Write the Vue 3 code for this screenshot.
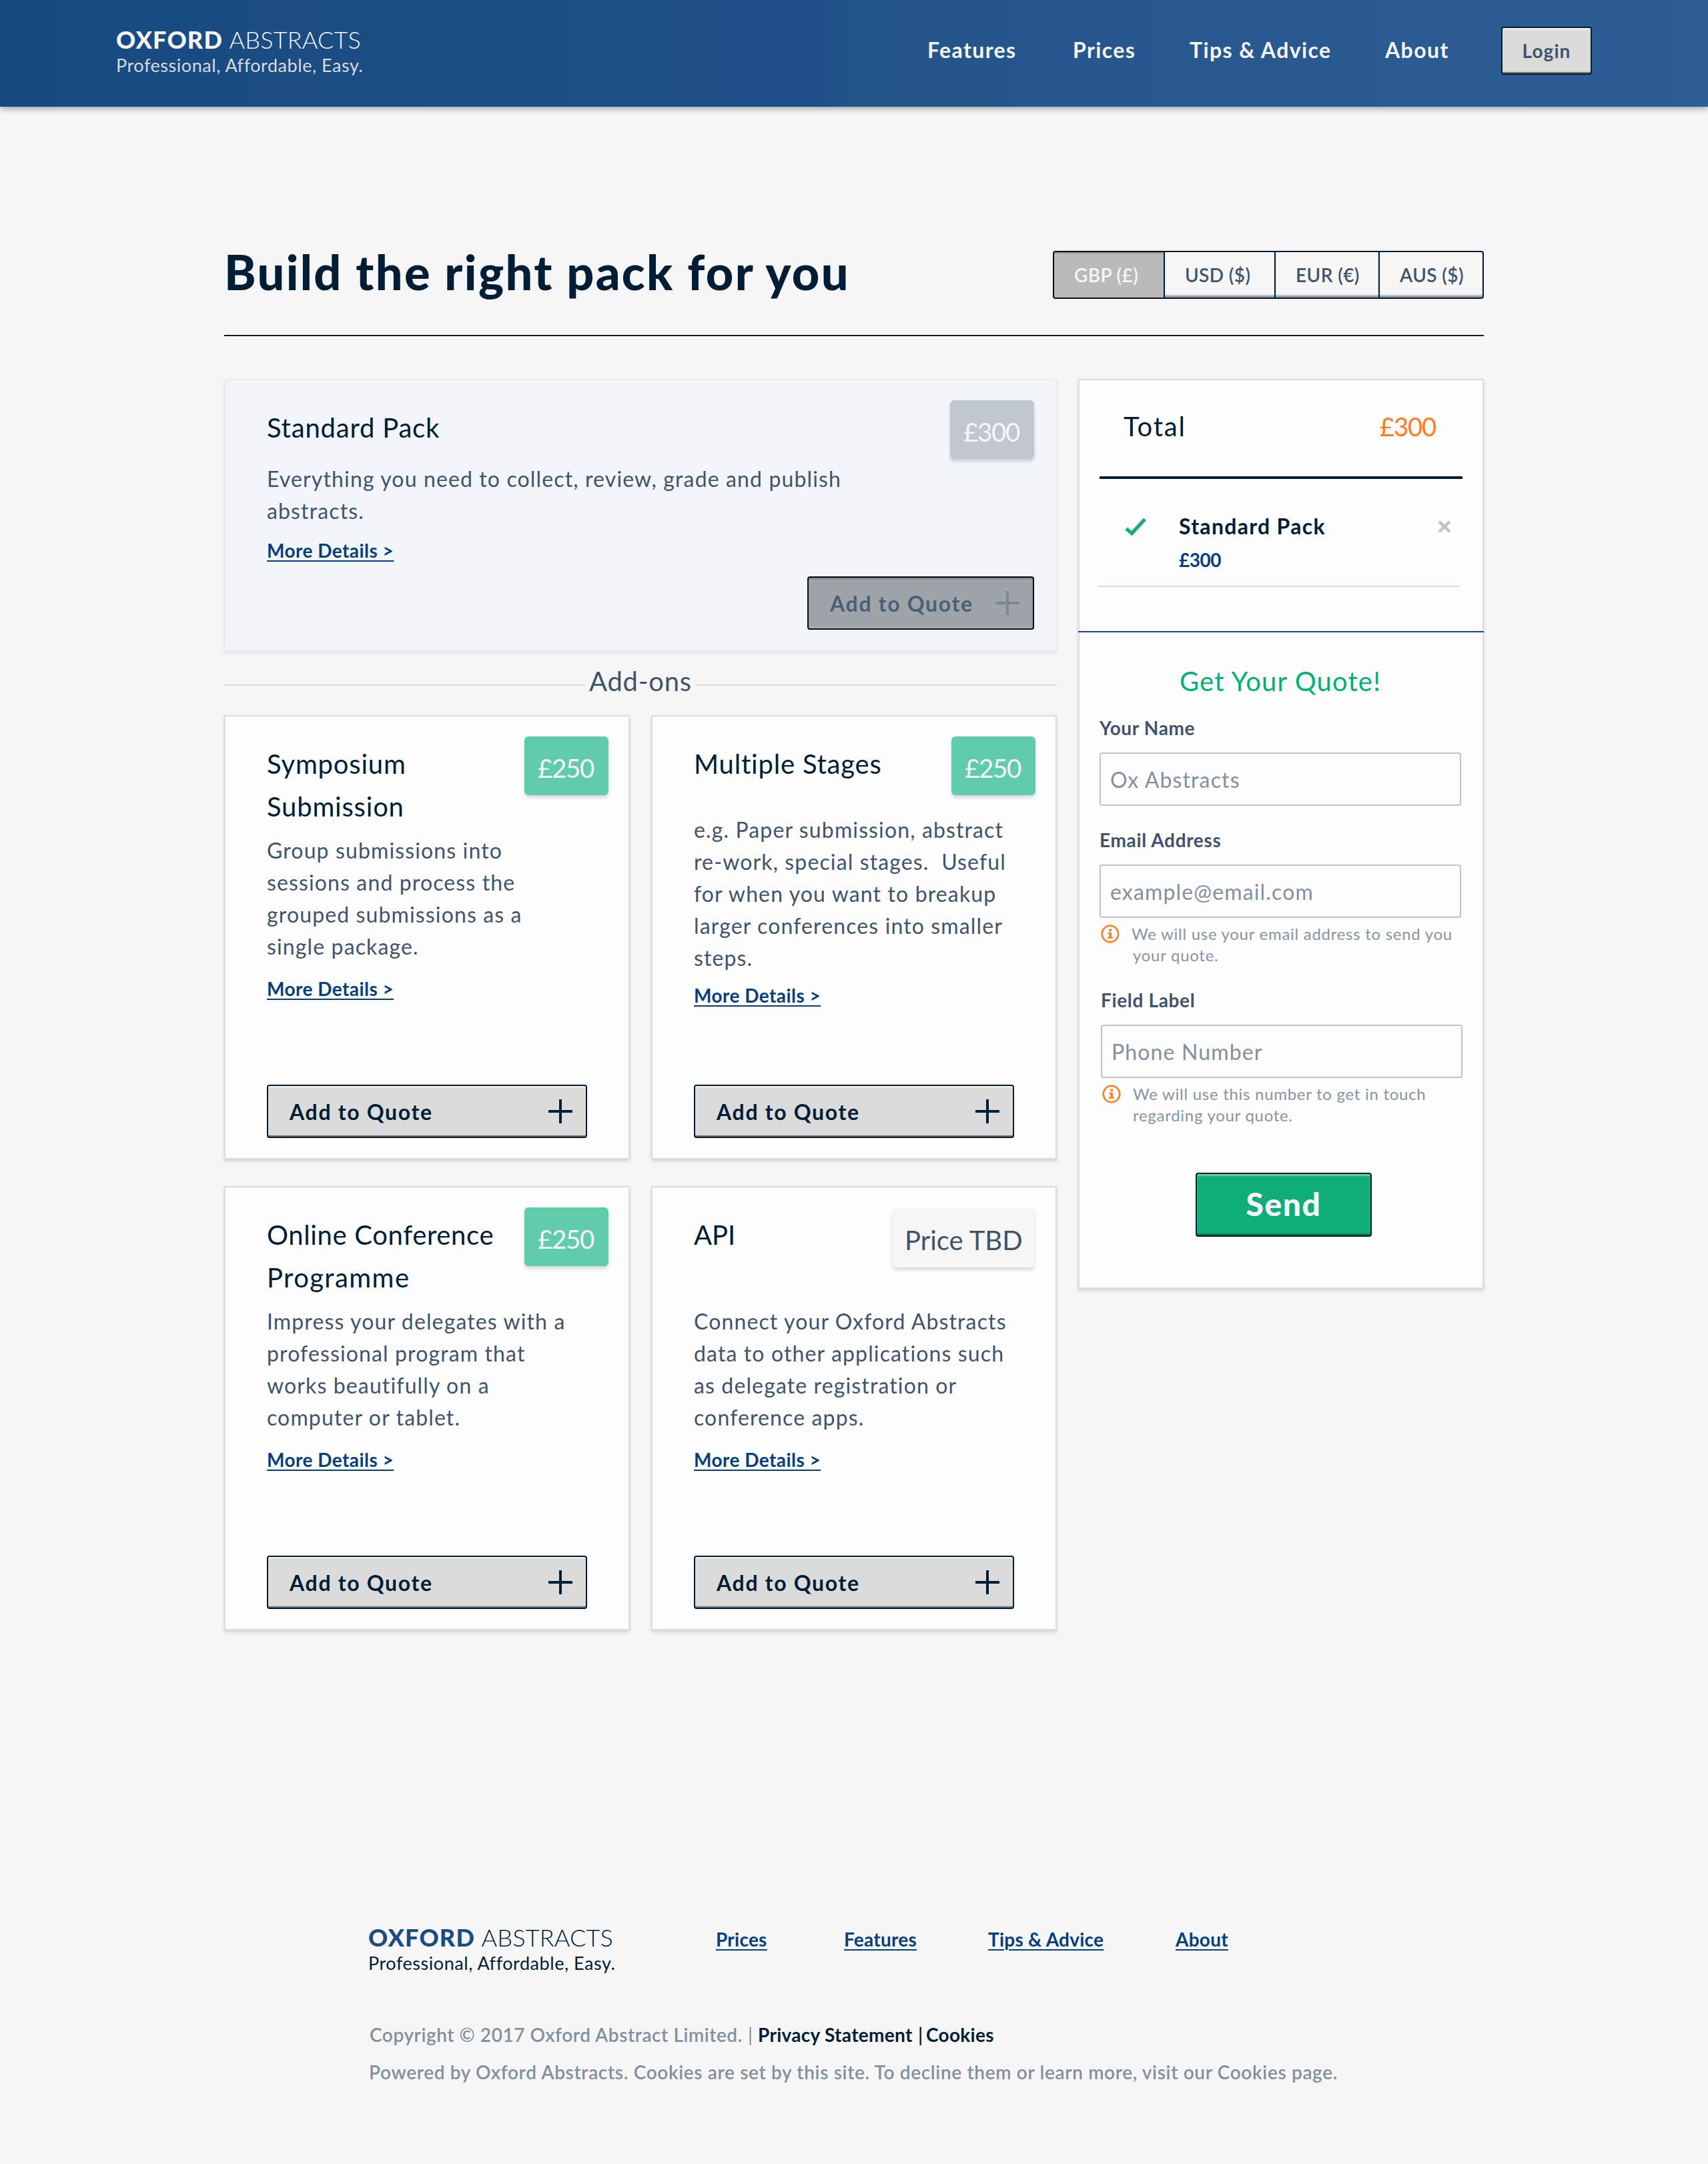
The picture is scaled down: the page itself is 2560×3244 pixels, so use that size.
<script setup>
import { ref } from 'vue'

const navLinks = ['Features', 'Prices', 'Tips & Advice', 'About']
const footerLinks = ['Prices', 'Features', 'Tips & Advice', 'About']

const currencies = ['GBP (£)', 'USD ($)', 'EUR (€)', 'AUS ($)']
const currency = ref('GBP (£)')

const addOns = [
  {
    id: 'symposium',
    title: ['Symposium', 'Submission'],
    price: '£250',
    lines: ['Group submissions into', 'sessions and process the', 'grouped submissions as a', 'single package.'],
  },
  {
    id: 'stages',
    title: ['Multiple Stages'],
    price: '£250',
    lines: [
      'e.g. Paper submission, abstract',
      're-work, special stages.\u00a0 Useful',
      'for when you want to breakup',
      'larger conferences into smaller',
      'steps.',
    ],
  },
  {
    id: 'programme',
    title: ['Online Conference', 'Programme'],
    price: '£250',
    lines: ['Impress your delegates with a', 'professional program that', 'works beautifully on a', 'computer or tablet.'],
  },
  {
    id: 'api',
    title: ['API'],
    price: null,
    lines: ['Connect your Oxford Abstracts', 'data to other applications such', 'as delegate registration or', 'conference apps.'],
  },
]

const fields = [
  { id: 'name', label: 'Your Name', type: 'text', placeholder: 'Ox Abstracts', hint: null },
  {
    id: 'email',
    label: 'Email Address',
    type: 'email',
    placeholder: 'example@email.com',
    hint: ['We will use your email address to send you', 'your quote.'],
  },
  {
    id: 'phone',
    label: 'Field Label',
    type: 'tel',
    placeholder: 'Phone Number',
    hint: ['We will use this number to get in touch', 'regarding your quote.'],
  },
]
</script>

<template>
  <div class="page">
    <header class="topbar">
      <div class="logo">
        <div class="logo-name"><strong>OXFORD</strong><span>ABSTRACTS</span></div>
        <div class="logo-tag">Professional, Affordable, Easy.</div>
      </div>
      <nav class="nav">
        <a v-for="link in navLinks" :key="link" class="nav-link">{{ link }}</a>
        <button class="btn login">Login</button>
      </nav>
    </header>

    <main class="content">
      <div class="heading">
        <h1>Build the right pack for you</h1>
        <div class="currencies">
          <button
            v-for="c in currencies"
            :key="c"
            class="currency"
            :class="{ active: c === currency }"
            @click="currency = c"
          >{{ c }}</button>
        </div>
      </div>

      <div class="columns">
        <div class="packs">
          <article class="card standard">
            <div class="head">
              <h2 class="title">Standard Pack</h2>
              <span class="badge muted">£300</span>
            </div>
            <p class="desc">
              <span class="line">Everything you need to collect, review, grade and publish</span>
              <span class="line">abstracts.</span>
            </p>
            <a class="more">More Details &gt;</a>
            <button class="btn add disabled" disabled>
              <span>Add to Quote</span>
              <svg class="plus" viewBox="0 0 36 36"><path d="M18 0V36M0 18H36" /></svg>
            </button>
          </article>

          <div class="separator"><span>Add-ons</span></div>

          <div class="grid">
            <article v-for="item in addOns" :key="item.id" class="card addon" :class="item.id">
              <div class="head">
                <h2 class="title">
                  <span v-for="t in item.title" :key="t" class="line">{{ t }}</span>
                </h2>
                <span v-if="item.price" class="badge">{{ item.price }}</span>
                <span v-else class="badge tbd">Price TBD</span>
              </div>
              <p class="desc">
                <span v-for="l in item.lines" :key="l" class="line">{{ l }}</span>
              </p>
              <a class="more">More Details &gt;</a>
              <button class="btn add">
                <span>Add to Quote</span>
                <svg class="plus" viewBox="0 0 36 36"><path d="M18 0V36M0 18H36" /></svg>
              </button>
            </article>
          </div>
        </div>

        <aside class="card quote">
          <section class="summary">
            <div class="total">
              <span>Total</span>
              <span class="total-price">£300</span>
            </div>
            <div class="item">
              <svg class="check" viewBox="0 0 32 27"><path d="M2 16.5L10.5 23.5L30 2.2" /></svg>
              <div class="item-text">
                <div class="item-name">Standard Pack</div>
                <div class="item-price">£300</div>
              </div>
              <svg class="remove" viewBox="0 0 20 19"><path d="M2 1.8L18 17.2M18 1.8L2 17.2" /></svg>
            </div>
          </section>

          <form class="form" @submit.prevent>
            <h3>Get Your Quote!</h3>
            <div v-for="f in fields" :key="f.id" class="field" :class="f.id">
              <label :for="f.id">{{ f.label }}</label>
              <input :id="f.id" :type="f.type" :placeholder="f.placeholder" />
              <div v-if="f.hint" class="hint">
                <svg class="info" viewBox="0 0 28 28">
                  <circle class="ring" cx="14" cy="14" r="12.2" />
                  <path d="M12.2 6.6h3.8v3.4h-3.8zM10.4 11.8h5.6v6.8h2.2v2.2h-8.4v-2.2h2.6v-4.6h-2z" />
                </svg>
                <p>
                  <span v-for="h in f.hint" :key="h" class="line">{{ h }}</span>
                </p>
              </div>
            </div>
            <button class="btn send">Send</button>
          </form>
        </aside>
      </div>
    </main>

    <footer class="footer">
      <div class="footer-top">
        <div class="logo dark">
          <div class="logo-name"><strong>OXFORD</strong><span>ABSTRACTS</span></div>
          <div class="logo-tag">Professional, Affordable, Easy.</div>
        </div>
        <nav class="footer-nav">
          <a v-for="link in footerLinks" :key="link">{{ link }}</a>
        </nav>
      </div>
      <p class="legal">
        <span class="copy">Copyright © 2017 Oxford Abstract Limited.</span>
        <span class="bar">|</span>
        <a class="privacy">Privacy Statement</a>
        <span class="bar dark-bar">|</span>
        <a>Cookies</a>
      </p>
      <p class="legal powered">Powered by Oxford Abstracts. Cookies are set by this site. To decline them or learn more, visit our Cookies page.</p>
    </footer>
  </div>
</template>

<style>
html,
body {
  margin: 0;
  background: #f6f6f6;
}
</style>

<style scoped>
.page {
  width: 2560px;
  height: 3244px;
  background: #f6f6f6;
  color: #001d36;
  font-family: Lato, 'Liberation Sans', sans-serif;
  box-sizing: border-box;
  overflow: hidden;
}
.page *,
.page *::before,
.page *::after {
  box-sizing: border-box;
}
h1,
h2,
h3,
p {
  margin: 0;
  font-weight: 400;
}
.line {
  display: block;
  white-space: nowrap;
}

/* Top bar */
.topbar {
  display: flex;
  justify-content: space-between;
  height: 160px;
  padding: 40px 174px 0;
  background: linear-gradient(90deg, #174a80 0%, #1f5089 48%, #22558a 50%, #26568d 62%, #2c5e95 100%);
  box-shadow: 0 2px 10px rgba(20, 0, 20, 0.42);
}
.logo {
  color: #f6f6f6;
  white-space: nowrap;
}
.logo-name {
  display: flex;
  height: 40px;
  padding-top: 1px;
  line-height: 36px;
  font-size: 36px;
  font-weight: 300;
}
.logo-name strong {
  width: 169.5px;
  font-weight: 900;
  letter-spacing: 1.2px;
}
.logo-name span {
  letter-spacing: 0.2px;
}
.logo-tag {
  color: #d9dadc;
  font-size: 27px;
  font-weight: 400;
  line-height: 35px;
  letter-spacing: 0.55px;
}
.nav {
  display: grid;
  grid-template-columns: 218px 175px 293px 174px 136px;
}
.nav-link {
  color: #f6f6f6;
  font-size: 32px;
  font-weight: 700;
  line-height: 69px;
  letter-spacing: 1.4px;
}

/* Buttons */
.btn {
  margin: 0;
  border: 2px solid #001d36;
  border-radius: 4px;
  background: #dbdbdb;
  color: #001d36;
  font-family: inherit;
  box-shadow: inset 0 3px 2px -1px rgba(255, 255, 255, 0.8), inset 0 -3px 1px -1px rgba(0, 0, 0, 0.5);
}
.login {
  height: 72px;
  padding: 0 0 1px;
  color: #3c536a;
  font-size: 28px;
  font-weight: 700;
  letter-spacing: 1.1px;
}
.add {
  display: flex;
  justify-content: space-between;
  align-items: center;
  width: 480px;
  height: 80px;
  padding: 0 20px 0 32px;
  font-size: 32px;
  font-weight: 700;
  letter-spacing: 1.69px;
}
.plus {
  width: 36px;
  height: 36px;
  margin-bottom: 1px;
  fill: none;
  stroke: #001d36;
  stroke-width: 4;
}
.add.disabled {
  width: 340px;
  border-color: #0c0d0f;
  background: #9fa4ab;
  color: #4c5f73;
  box-shadow: inset 0 2px 2px rgba(0, 0, 0, 0.25), inset 0 -2px 1px rgba(255, 255, 255, 0.2);
}
.disabled .plus {
  stroke: #7a8794;
}

/* Heading */
.content {
  width: 1888px;
  margin: 0 336px;
}
.heading {
  display: flex;
  justify-content: space-between;
  height: 344px;
  padding-top: 216px;
  border-bottom: 2px solid #001d36;
}
h1 {
  height: 112px;
  margin-top: -25px;
  font-size: 72px;
  font-weight: 900;
  line-height: 112px;
  letter-spacing: 2.35px;
}
.currencies {
  display: grid;
  grid-template-columns: 166px 166px 156px 158px;
  height: 72px;
}
.currency {
  margin: 0;
  padding: 0 0 1px 30px;
  border: 2px solid #001d36;
  border-right: 0;
  background: #f6f6f6;
  color: #3f546b;
  font-family: inherit;
  font-size: 28px;
  font-weight: 600;
  letter-spacing: 0.4px;
  text-align: left;
  box-shadow: inset 0 -4px 3px -1px rgba(0, 0, 0, 0.42);
}
.currency:first-child {
  border-radius: 4px 0 0 4px;
}
.currency:last-child {
  border-right: 2px solid #001d36;
  border-radius: 0 4px 4px 0;
}
.currency.active {
  border-color: #0c0d0f;
  background: #bababa;
  color: #f6f6f6;
  box-shadow: inset 0 2px 1px rgba(0, 0, 0, 0.2);
}

/* Cards */
.columns {
  display: flex;
  align-items: flex-start;
  gap: 32px;
  margin-top: 64px;
}
.packs {
  width: 1248px;
}
.card {
  border: 2px solid #dbdbdd;
  background: #fdfdfd;
  box-shadow: 0 3px 5px rgba(0, 29, 54, 0.15);
}
.standard,
.addon {
  display: flex;
  flex-direction: column;
  align-items: flex-start;
  padding: 30px 30px 30px 62px;
}
.standard {
  height: 408px;
  padding-right: 32px;
  border-color: #e9ebec;
  background: #f2f5fa;
  box-shadow: 0 3px 5px rgba(0, 29, 54, 0.08);
}
.addon {
  height: 666px;
}
.head {
  display: flex;
  justify-content: space-between;
  align-items: flex-start;
  align-self: stretch;
}
.title {
  margin-top: 9px;
  font-size: 40px;
  line-height: 64px;
  letter-spacing: 0.8px;
}
.badge {
  width: 126px;
  height: 88px;
  border-radius: 6px;
  background: #60ccac;
  color: #f6f6f6;
  font-size: 38.5px;
  line-height: 95px;
  letter-spacing: -1.3px;
  text-indent: 20px;
  white-space: nowrap;
  box-shadow: 0 4px 5px rgba(0, 29, 54, 0.16);
}
.badge.muted {
  background: #c0c7cf;
}
.badge.tbd {
  width: 212px;
  margin: 2px 2px 0 0;
  background: #f6f6f6;
  color: #3f546b;
  font-size: 40px;
  letter-spacing: 0;
  text-indent: 18px;
}
.desc {
  color: #3f546b;
  font-size: 32px;
  line-height: 48px;
  letter-spacing: 1.13px;
}
.more {
  color: #043e7c;
  font-size: 28px;
  font-weight: 700;
  line-height: 40px;
  letter-spacing: 0.45px;
  text-decoration: underline;
  text-decoration-thickness: 2px;
  text-underline-offset: 4px;
}

.standard .head {
  height: 94px;
}
.standard .desc {
  margin-bottom: 15px;
}
.standard .add {
  align-self: flex-end;
  margin-top: 19px;
}

.addon .head {
  height: 147px;
}
.addon .desc {
  margin-bottom: 19px;
}
.addon .add {
  margin-top: auto;
}
.stages .head {
  height: 116px;
}
.stages .desc {
  margin-bottom: 12px;
}
.programme .title {
  letter-spacing: 0.65px;
}
.programme .title .line + .line {
  letter-spacing: 1.4px;
}
.api .title {
  letter-spacing: 0;
}

.separator {
  display: flex;
  align-items: center;
  height: 96px;
  padding-top: 6px;
  gap: 6px;
  color: #3f546b;
  font-size: 40px;
  font-weight: 400;
  line-height: 64px;
  letter-spacing: 0.75px;
}
.separator span {
  margin-top: -12px;
}
.separator::before,
.separator::after {
  content: '';
  flex: 1;
  height: 2px;
  background: #dbdbdb;
}
.grid {
  display: grid;
  grid-template-columns: 608px 608px;
  gap: 40px 32px;
}

/* Quote panel */
.quote {
  width: 608px;
  height: 1364px;
}
.summary {
  height: 378px;
  margin: 0 -2px;
  padding: 0 32px;
  border-bottom: 2px solid #1a4480;
}
.total {
  display: flex;
  justify-content: space-between;
  height: 148px;
  padding: 37px 40px 0 36px;
  border-bottom: 4px solid #001d36;
  font-size: 40px;
  line-height: 64px;
  letter-spacing: 1.8px;
}
.total-price {
  color: #ff7a20;
  font-size: 38.5px;
  letter-spacing: -1.3px;
}
.item {
  display: flex;
  align-items: flex-start;
  width: 542px;
  height: 162px;
  margin-left: -2px;
  padding: 58px 13px 0 40px;
  border-bottom: 2px solid #d9dadc;
}
.check {
  width: 32px;
  height: 27px;
  fill: none;
  stroke: #15ad7b;
  stroke-width: 5.4;
}
.item-text {
  flex: 1;
  margin: -11px 0 0 49px;
}
.item-name {
  font-size: 32px;
  font-weight: 700;
  line-height: 48px;
  letter-spacing: 1.3px;
}
.item-price {
  margin-top: 6px;
  color: #043e7c;
  font-size: 28px;
  font-weight: 700;
  line-height: 40px;
  letter-spacing: -0.5px;
}
.remove {
  width: 20px;
  height: 19px;
  margin-top: 4px;
  fill: none;
  stroke: #bcc3cc;
  stroke-width: 4.4;
}

.form {
  display: flex;
  flex-direction: column;
  padding: 41px 32px 0 30px;
}
h3 {
  height: 82px;
  color: #00b075;
  font-size: 40px;
  line-height: 64px;
  letter-spacing: 1.14px;
  text-align: center;
}
.field {
  display: flex;
  flex-direction: column;
  width: 542px;
}
label {
  height: 57px;
  color: #3f546b;
  font-size: 28px;
  font-weight: 700;
  line-height: 40px;
  letter-spacing: 0.65px;
}
input {
  width: 542px;
  height: 80px;
  margin: 0;
  padding: 0 14px;
  border: 2px solid #bcc3cc;
  border-radius: 4px;
  background: #fdfdfd;
  color: #3f546b;
  font-family: inherit;
  font-size: 32px;
  letter-spacing: 1.15px;
}
input::placeholder {
  color: #8290a0;
  opacity: 1;
}
.hint {
  display: flex;
  height: 103px;
  padding: 8px 0 0 2px;
  color: #8794a3;
  font-size: 24px;
  line-height: 32px;
  letter-spacing: 0.72px;
}
.info {
  flex: none;
  width: 28px;
  height: 28px;
  margin: 2px 18px 0 0;
  fill: #ff7a20;
}
.ring {
  fill: none;
  stroke: #ff7a20;
  stroke-width: 2.6;
}
.hint .line + .line {
  padding-left: 2px;
}
.name {
  height: 168px;
}
.phone {
  margin-left: 2px;
}
.phone .hint .line + .line {
  padding-left: 0;
}
.send {
  align-self: center;
  width: 264px;
  height: 96px;
  margin: 39px 0 0 10px;
  padding: 0 0 3px;
  background: #0fad78;
  color: #f6f6f6;
  font-size: 48px;
  font-weight: 900;
  letter-spacing: 1.5px;
  box-shadow: inset 0 3px 2px rgba(255, 255, 255, 0.4), inset 0 -3px 2px -1px rgba(0, 0, 0, 0.5);
}

/* Footer */
.footer {
  margin: 441px 0 0 552px;
}
.footer-top {
  display: flex;
  height: 145px;
}
.logo.dark {
  width: 521px;
  color: #001d36;
}
.dark strong {
  color: #1a4b84;
}
.dark .logo-tag {
  color: #001d36;
}
.footer-nav {
  display: grid;
  grid-template-columns: 192px 216px 281px 90px;
  color: #043e7c;
  font-size: 28px;
  font-weight: 700;
  line-height: 44px;
  letter-spacing: 0.25px;
}
.footer-nav a {
  text-decoration: underline;
  text-decoration-thickness: 2px;
  text-underline-offset: 4px;
}
.legal {
  display: flex;
  height: 56px;
  padding-left: 2px;
  color: #82909d;
  font-size: 28px;
  font-weight: 600;
  line-height: 40px;
  letter-spacing: 0.56px;
  white-space: nowrap;
}
.copy {
  width: 567px;
}
.bar {
  width: 15px;
  font-weight: 400;
}
.legal a {
  color: #001d36;
  font-weight: 700;
  letter-spacing: 0.3px;
}
.legal .privacy {
  width: 240px;
}
.legal .dark-bar {
  width: 12px;
  color: #001d36;
  font-weight: 600;
}
.powered {
  padding-left: 1px;
  letter-spacing: 0.66px;
}
</style>
